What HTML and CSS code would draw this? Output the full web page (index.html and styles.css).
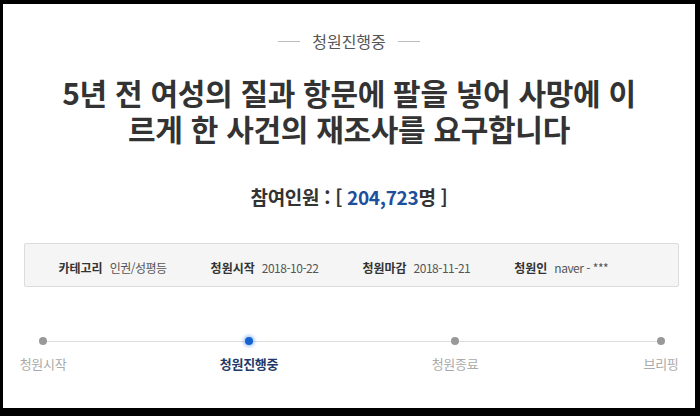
FILE: index.html
```html
<!DOCTYPE html>
<html lang="ko">
<head>
<meta charset="utf-8">
<link rel="stylesheet" href="styles.css">
</head>
<body>
<div class="frame">
  <div class="status"><span class="status-text">청원진행중</span></div>
  <h1 class="title">5년 전 여성의 질과 항문에 팔을 넣어 사망에 이르게 한 사건의 재조사를 요구합니다</h1>
  <div class="count">참여인원 : [ <span class="num">204,723</span>명 ]</div>
  <ul class="info">
    <li><b>카테고리</b><span>인권/성평등</span></li>
    <li><b>청원시작</b><span>2018-10-22</span></li>
    <li><b>청원마감</b><span>2018-11-21</span></li>
    <li><b>청원인</b><span>naver - ***</span></li>
  </ul>
  <ol class="steps">
    <li class="step"><i class="dot"></i><span class="label">청원시작</span></li>
    <li class="step active"><i class="dot"></i><span class="label">청원진행중</span></li>
    <li class="step"><i class="dot"></i><span class="label">청원종료</span></li>
    <li class="step"><i class="dot"></i><span class="label">브리핑</span></li>
  </ol>
</div>
</body>
</html>
```
FILE: styles.css
```css
html, body {
  margin: 0;
  padding: 0;
  background: #000;
}
body {
  width: 700px;
  height: 416px;
  overflow: hidden;
  font-family: "Noto Sans CJK KR", "Noto Sans", sans-serif;
}
.frame {
  margin: 4px 5px 0 3px;
  width: 692px;
  height: 404px;
  background: #fff;
  box-sizing: border-box;
  padding-top: 27px;
  display: flex;
  flex-direction: column;
  align-items: center;
}
.status {
  display: flex;
  align-items: center;
  gap: 12px;
  height: 20px;
  color: #555;
  font-size: 16px;
  line-height: 20px;
}
.status::before,
.status::after {
  content: "";
  width: 22px;
  height: 1px;
  background: #bbb;
}
.title {
  margin: 23px 0 0;
  width: 600px;
  font-size: 30px;
  line-height: 36px;
  font-weight: bold;
  color: #333;
  text-align: center;
  letter-spacing: -0.3px;
  word-break: break-all;
}
.count {
  margin-top: 38px;
  font-size: 19px;
  line-height: 26px;
  font-weight: bold;
  color: #333;
  letter-spacing: -0.3px;
}
.count .num {
  color: #1c4f9c;
}
.info {
  list-style: none;
  margin: 33px 0 0 4px;
  padding: 4px 0 0 34px;
  box-sizing: border-box;
  width: 655px;
  height: 44px;
  border: 1px solid #dcdcdc;
  border-radius: 2px;
  background: #f5f5f5;
  display: flex;
  align-items: center;
  gap: 44px;
  font-size: 12px;
  color: #555;
}
.info li {
  display: flex;
  gap: 7px;
}
.info span {
  letter-spacing: -0.5px;
}
.info b {
  color: #333;
}
.steps {
  list-style: none;
  margin: 50px 0 0 6px;
  padding: 0;
  width: 678px;
  display: flex;
  justify-content: space-between;
  position: relative;
}
.steps::before {
  content: "";
  position: absolute;
  left: 30px;
  right: 30px;
  top: 4px;
  height: 1px;
  background: #ddd;
}
.step {
  width: 60px;
  display: flex;
  flex-direction: column;
  align-items: center;
  position: relative;
}
.dot {
  width: 8px;
  height: 8px;
  border-radius: 50%;
  background: #999;
}
.label {
  margin-top: 10px;
  font-size: 13px;
  line-height: 18px;
  color: #aaa;
  white-space: nowrap;
  letter-spacing: -0.3px;
}
.active .dot {
  background: #1462d2;
  box-shadow: 0 0 3px 2px rgba(40, 120, 235, 0.35);
}
.active .label {
  color: #22396a;
  font-weight: bold;
}
```
